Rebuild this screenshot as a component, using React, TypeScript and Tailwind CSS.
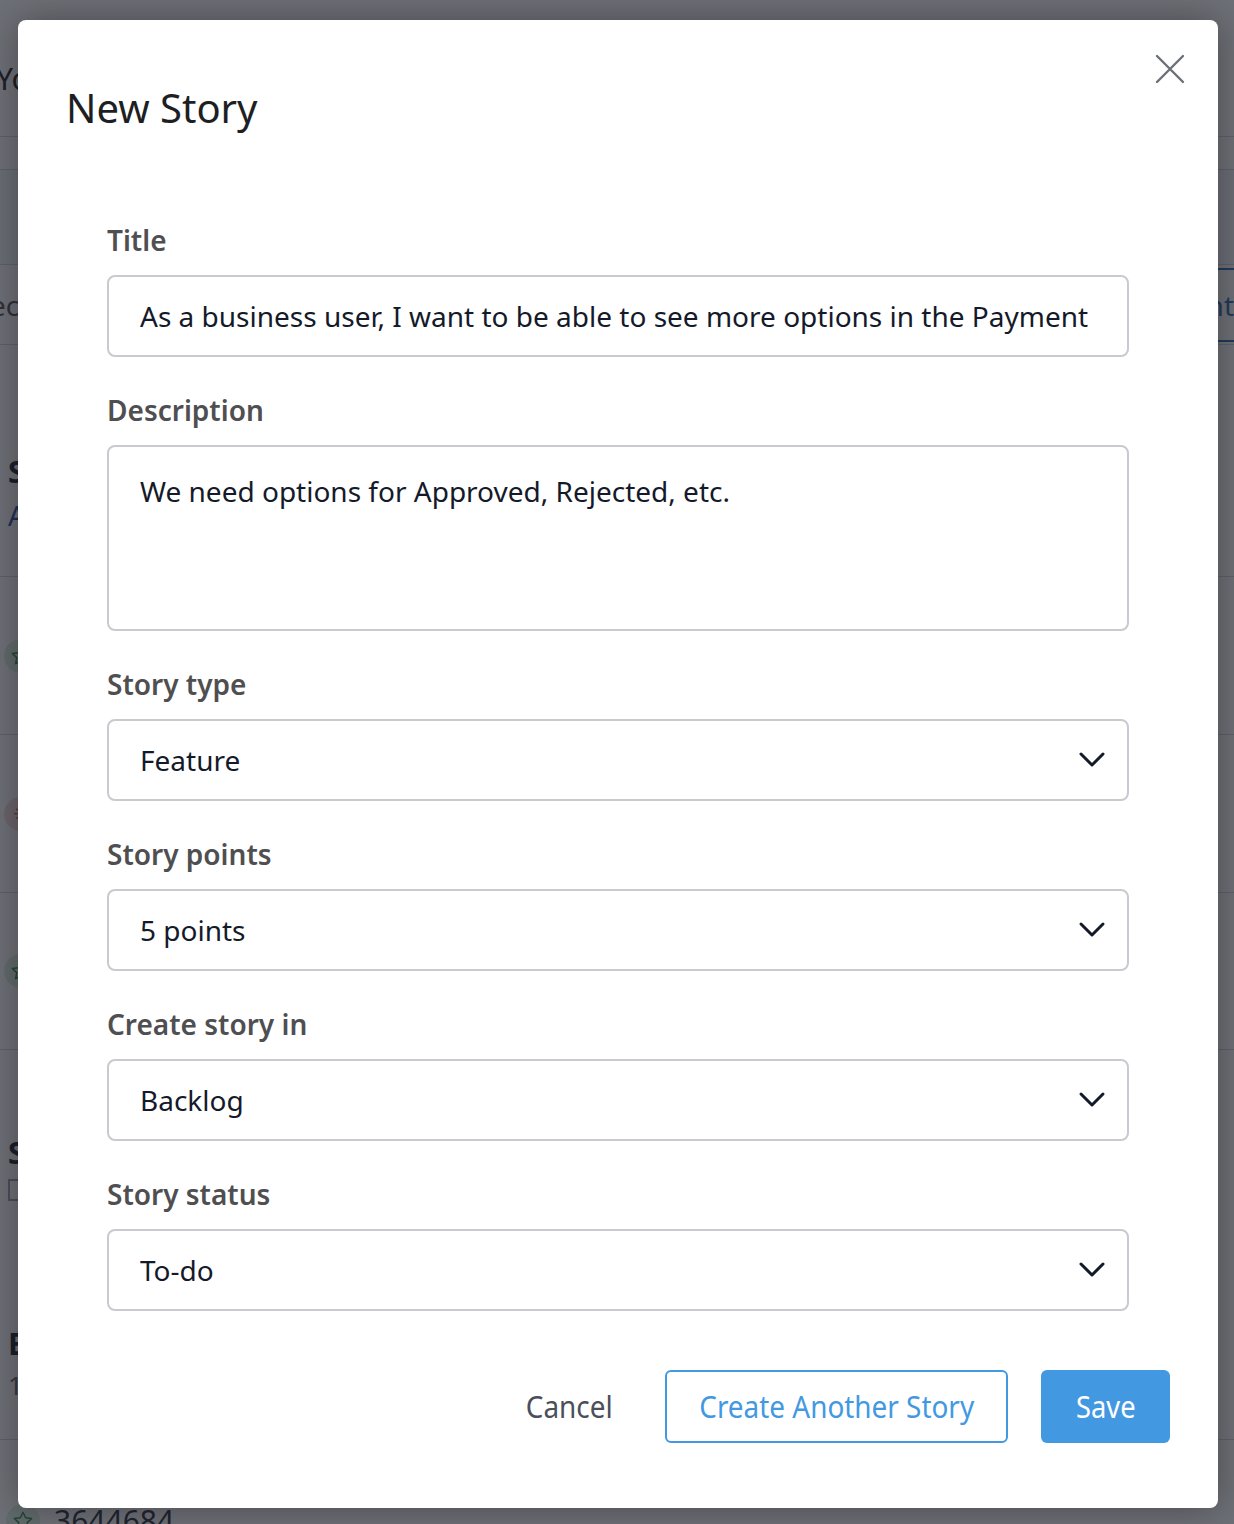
import React from "react";

const fieldBox =
  "w-full border-2 border-[#c9cacf] rounded-lg bg-white text-[28px] text-[#141a2a] outline-none";

function Label({ children }: { children: React.ReactNode }) {
  return (
    <div className="mb-[17px] text-[28px] leading-[36px] font-semibold text-[#4f4f52]">
      {children}
    </div>
  );
}

function Chevron() {
  return (
    <svg width="28" height="18" viewBox="0 0 28 18" fill="none">
      <path
        d="M3 3 L14 14 L25 3"
        stroke="#141a2a"
        strokeWidth="3"
        strokeLinecap="round"
        strokeLinejoin="round"
      />
    </svg>
  );
}

function SelectField({ label, value }: { label: string; value: string }) {
  return (
    <div className="mt-[35px]">
      <Label>{label}</Label>
      <div
        className={`${fieldBox} flex h-[82px] items-center justify-between pl-[31px] pr-[21px]`}
      >
        <span>{value}</span>
        <Chevron />
      </div>
    </div>
  );
}

function StarBadge() {
  return (
    <div className="flex h-[34px] w-[34px] shrink-0 items-center justify-center rounded-full bg-[#dcefe0]">
      <svg width="22" height="22" viewBox="0 0 24 24" fill="none">
        <path
          d="M12 2.5l2.9 6 6.6.8-4.9 4.5 1.3 6.5L12 17l-5.9 3.3 1.3-6.5-4.9-4.5 6.6-.8z"
          stroke="#2f8a45"
          strokeWidth="1.6"
          strokeLinejoin="round"
        />
      </svg>
    </div>
  );
}

function BackgroundPage() {
  return (
    <div className="flex h-[1524px] flex-col bg-white text-[#1f2937] [&>*]:shrink-0">
      <div className="flex h-[137px] items-end border-b border-gray-300 pb-[35px] -ml-[4px] text-[30px] text-[#222]">
        Your Stories
      </div>
      <div className="h-[33px] border-b border-gray-300" />
      <div className="h-[95px] border-b border-gray-300 bg-[#f6f7f9]" />
      <div className="flex h-[80px] items-center justify-between border-b border-gray-300">
        <span className="-ml-[10px] text-[28px] text-[#555]">ected</span>
        <span className="flex h-[74px] items-center border-y-2 border-[#2c6cb0] pl-[8px] pr-0 text-[28px] text-[#2c6cb0]">
          Current
        </span>
      </div>
      <div className="flex h-[232px] flex-col justify-end border-b border-gray-300 pb-[40px] pl-[8px]">
        <span className="text-[30px] font-bold text-[#1a1f2b]">Sprint</span>
        <span className="text-[28px] text-[#2c4fa8]">All</span>
      </div>
      <div className="flex h-[158px] items-center border-b border-gray-300 pl-[4px]">
        <StarBadge />
      </div>
      <div className="flex h-[158px] items-center border-b border-gray-300 pl-[4px]">
        <div className="flex h-[34px] w-[34px] items-center justify-center rounded-full bg-[#f7dede] text-[20px] text-[#c0392b]">
          ✳
        </div>
      </div>
      <div className="flex h-[157px] items-center border-b border-gray-300 pl-[4px]">
        <StarBadge />
      </div>
      <div className="flex h-[390px] flex-col border-b border-gray-300 pl-[8px] pt-[80px]">
        <span className="text-[30px] font-bold text-[#1a1f2b]">Sprint</span>
        <span className="mt-[4px] h-[22px] w-[22px] border-2 border-gray-400" />
        <span className="mt-[120px] text-[30px] font-bold text-[#1a1f2b]">Epic</span>
        <span className="text-[26px] text-[#666]">12</span>
      </div>
      <div className="flex items-center gap-[14px] pl-[6px] pt-[58px]">
        <StarBadge />
        <span className="text-[30px] text-[#2a2f3a]">3644684</span>
      </div>
    </div>
  );
}

export default function App() {
  return (
    <div className="relative h-[1524px] w-[1234px] overflow-hidden font-['Noto_Sans','Open_Sans',sans-serif]">
      <BackgroundPage />
      <div className="absolute inset-0 bg-[rgba(28,32,42,0.64)]">
        <div className="ml-[18px] mt-[20px] flex h-[1488px] w-[1200px] flex-col rounded-lg bg-white shadow-[0_0_36px_rgba(0,0,0,0.35)]">
          <div className="flex items-start justify-between pl-[48px] pr-[33px] pt-[34px]">
            <h2 className="mt-[30px] text-[40px] leading-[48px] font-normal text-[#1d1f24]">
              New Story
            </h2>
            <button aria-label="Close" className="h-[30px] w-[30px]">
              <svg width="30" height="30" viewBox="0 0 30 30" fill="none">
                <path
                  d="M2 2 L28 28 M28 2 L2 28"
                  stroke="#6b7078"
                  strokeWidth="2.4"
                  strokeLinecap="round"
                />
              </svg>
            </button>
          </div>

          <form className="mt-[90px] px-[89px]">
            <div>
              <Label>Title</Label>
              <input
                readOnly
                value="As a business user, I want to be able to see more options in the Payment"
                className={`${fieldBox} h-[82px] px-[31px]`}
              />
            </div>
            <div className="mt-[35px]">
              <Label>Description</Label>
              <textarea
                readOnly
                value="We need options for Approved, Rejected, etc."
                className={`${fieldBox} block h-[186px] resize-none px-[31px] pt-[24px] leading-[40px] text-[#3f4550]`}
              />
            </div>
            <SelectField label="Story type" value="Feature" />
            <SelectField label="Story points" value="5 points" />
            <SelectField label="Create story in" value="Backlog" />
            <SelectField label="Story status" value="To-do" />
          </form>

          <div className="mt-[59px] flex items-center justify-end pr-[48px]">
            <button className="mr-[47px] text-[31px] text-[#4a4f5b]">
              <span className="inline-block scale-x-[0.9]">Cancel</span>
            </button>
            <button className="h-[73px] w-[343px] rounded-md border-2 border-[#4299e1] text-[31px] text-[#4299e1]">
              <span className="inline-block scale-x-[0.9]">Create Another Story</span>
            </button>
            <button className="ml-[33px] h-[73px] w-[129px] rounded-md bg-[#4299e1] text-[31px] text-white">
              <span className="inline-block scale-x-[0.88]">Save</span>
            </button>
          </div>
        </div>
      </div>
    </div>
  );
}
